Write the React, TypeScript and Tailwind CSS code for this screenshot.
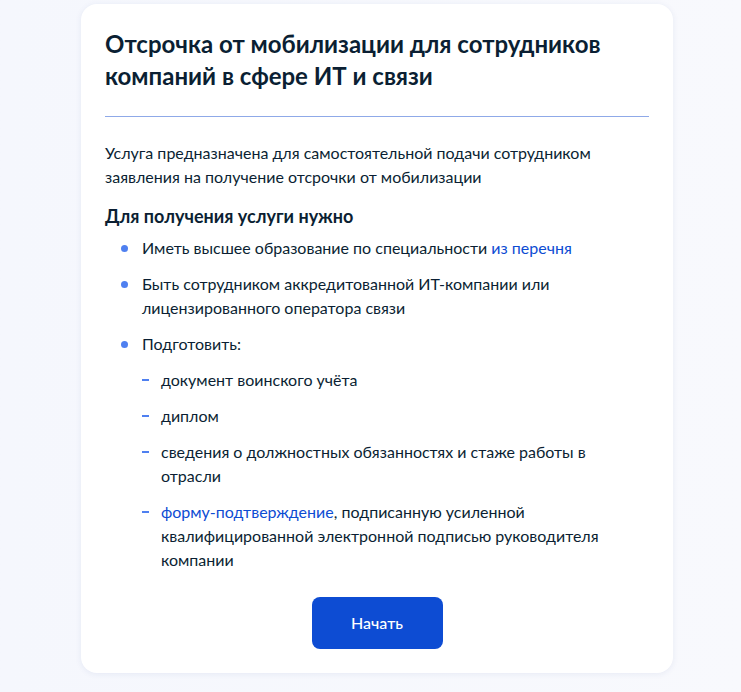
const needs = [
  { text: "Иметь высшее образование по специальности ", link: "из перечня" },
  { text: "Быть сотрудником аккредитованной ИТ-компании или лицензированного оператора связи" },
];

const documents = [
  { text: "документ воинского учёта" },
  { text: "диплом" },
  { text: "сведения о должностных обязанностях и стаже работы в отрасли" },
  {
    link: "форму-подтверждение",
    text: ", подписанную усиленной квалифицированной электронной подписью руководителя компании",
  },
];

function Bullet() {
  return <span className="mt-[9px] h-[7px] w-[7px] shrink-0 rounded-full bg-[#4f80f0]" />;
}

function Dash() {
  return <span className="mt-[11px] h-[2px] w-[7px] shrink-0 bg-[#4f80f0]" />;
}

export default function App() {
  return (
    <main
      className="flex min-h-[692px] justify-center bg-gradient-to-r from-[#f5f7fd] to-[#f8f9fd] pt-1 pb-5 pl-[13px] text-[#0b1f33]"
      style={{ fontFamily: "Lato, 'Noto Sans', sans-serif" }}
    >
      <div className="w-[592px] rounded-2xl bg-white p-6 shadow-[0_1px_6px_rgba(40,70,140,0.08)]">
        {/* Title */}
        <h1 className="text-[24px] font-bold leading-8">
          Отсрочка от мобилизации для сотрудников компаний в сфере ИТ и связи
        </h1>
        <div className="mt-6 h-px bg-[#8fa9e8]" />

        <p className="mt-6 text-base leading-6">
          Услуга предназначена для самостоятельной подачи сотрудником заявления на получение отсрочки от мобилизации
        </p>

        <h2 className="mt-[15px] text-lg font-bold leading-6">Для получения услуги нужно</h2>

        <ul className="mt-2 flex flex-col gap-3 pl-4 text-base leading-6">
          {needs.map((item, i) => (
            <li key={i} className="flex gap-[14px]">
              <Bullet />
              <span>
                {item.text}
                {item.link && <a className="text-[#0d4cd3]">{item.link}</a>}
              </span>
            </li>
          ))}
          <li className="flex gap-[14px]">
            <Bullet />
            <div className="flex flex-col gap-3">
              <span>Подготовить:</span>
              <ul className="flex flex-col gap-3">
                {documents.map((doc, i) => (
                  <li key={i} className="flex gap-[12px]">
                    <Dash />
                    <span>
                      {doc.link && <a className="text-[#0d4cd3]">{doc.link}</a>}
                      {doc.text}
                    </span>
                  </li>
                ))}
              </ul>
            </div>
          </li>
        </ul>

        <div className="mt-[25px] flex justify-center">
          <button className="h-[52px] w-[131px] rounded-lg bg-[#0d4cd3] text-base font-medium text-white">
            Начать
          </button>
        </div>
      </div>
    </main>
  );
}
